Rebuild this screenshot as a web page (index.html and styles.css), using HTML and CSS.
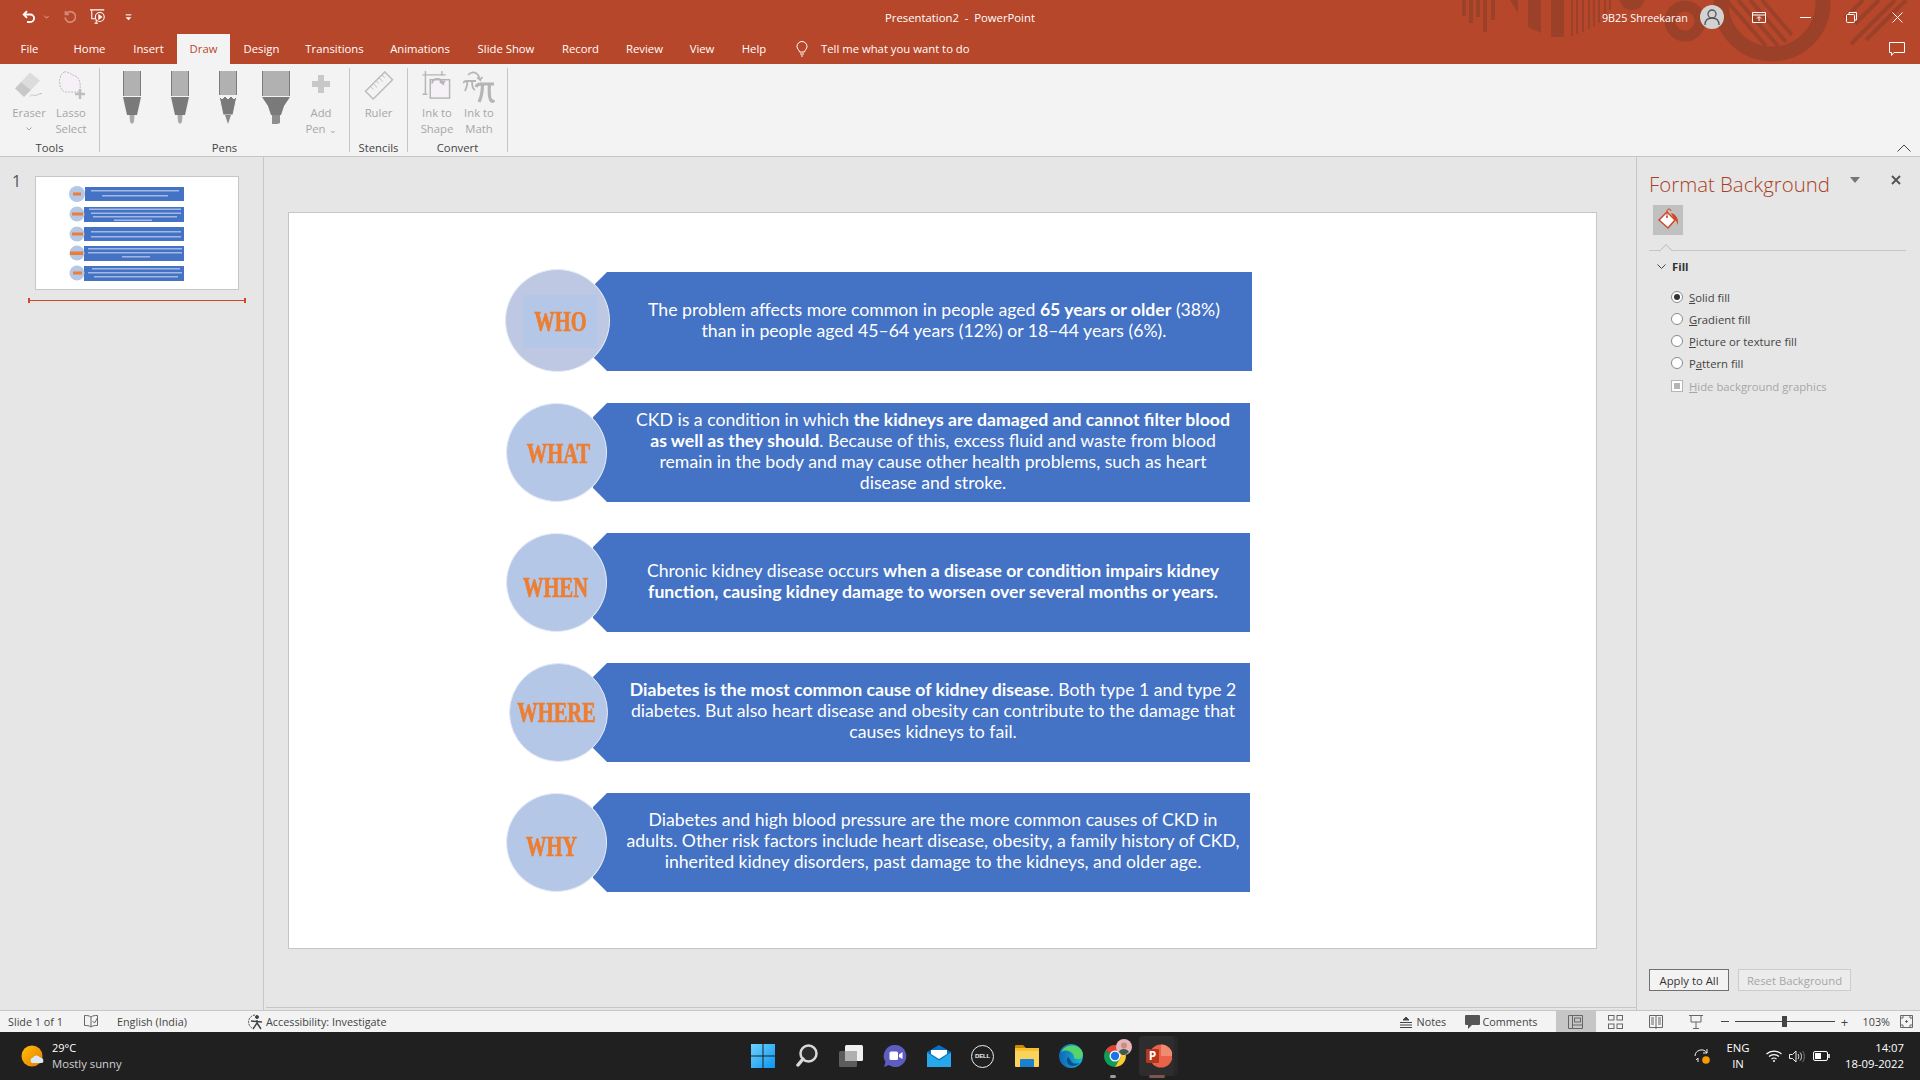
FILE: index.html
```html
<!DOCTYPE html>
<html lang="en">
<head>
<meta charset="utf-8">
<title>Presentation2 - PowerPoint</title>
<link rel="stylesheet" href="styles.css">
</head>
<body>
<header class="chrome">
  <svg class="decor" width="500" height="64" viewBox="1420 0 500 64" fill="#9b412a">
    <rect x="1462" y="0" width="4" height="16"/><rect x="1469" y="0" width="4" height="23"/><rect x="1476" y="0" width="4" height="17"/><rect x="1483" y="0" width="4" height="32"/><rect x="1491" y="0" width="4" height="20"/>
    <path d="M1510 0h8v13z"/><path d="M1528 0h13v33l-13-6z"/><rect x="1551" y="0" width="13" height="37"/>
    <rect x="1571" y="0" width="2" height="36"/><rect x="1576" y="0" width="2" height="34"/><rect x="1582" y="0" width="2" height="32"/><rect x="1588" y="0" width="2" height="29"/><rect x="1593" y="0" width="2" height="26"/><rect x="1598" y="0" width="2" height="23"/><rect x="1604" y="0" width="2" height="18"/><rect x="1609" y="0" width="2" height="10"/>
    <circle cx="1632" cy="-3" r="13"/>
    <circle cx="1685" cy="21" r="15" fill="none" stroke="#9b412a" stroke-width="11"/>
    <circle cx="1772" cy="3" r="51" fill="none" stroke="#9b412a" stroke-width="15"/>
    <g fill="none" stroke="#9b412a" stroke-width="4">
      <path d="M1726 0l40 46M1738 0l40 46M1750 0l36 42M1762 0l30 35"/>
      <path d="M1851 44l44-44M1866 40l40-40M1845 18l18-18M1855 24l24-24"/>
    </g>
  </svg>
  <div class="title-row">
    <div class="qat">
      <svg class="q-undo" width="15" height="14" viewBox="0 0 18 16" fill="none" stroke="#fff" stroke-width="2.200"><path d="M6 1L2 5l4 4M2 5h8a4.500 4.500 0 0 1 0 9H6"/></svg>
      <svg class="q-caret" width="5" height="4" viewBox="0 0 7 4" fill="none" stroke="#f3d9d2"><path d="M.5.500l3 3 3-3"/></svg>
      <svg class="q-redo" width="14" height="14" viewBox="0 0 16 16" fill="none" stroke="#d38a76" stroke-width="2"><path d="M4 1v4h4M4.500 4.500a6 6 0 1 1-1 4"/></svg>
      <svg class="q-show" width="16" height="16" viewBox="0 0 18 18" fill="none" stroke="#fff" stroke-width="1.200"><path d="M0 1h16M2 1v10h4M5 16h4M7 12v4"/><circle cx="11" cy="9" r="5"/><path d="M10 6.500v5l3-2.500z" fill="#fff"/></svg>
      <svg class="q-more" width="7" height="7" viewBox="0 0 10 9" fill="#fff"><rect x="1" y="0" width="8" height="1.500"/><path d="M1 4h8L5 8.500z"/></svg>
    </div>
    <div class="doc-title">Presentation2 &nbsp;-&nbsp; PowerPoint</div>
    <div class="win">
      <span class="user">9B25 Shreekaran</span>
      <span class="avatar"><svg width="16" height="16" viewBox="0 0 16 16" fill="none" stroke="#555" stroke-width="1.300"><circle cx="8" cy="5" r="4"/><path d="M1 16c0-5 3-7 7-7s7 2 7 7"/></svg></span>
      <span class="ctl"><svg width="14" height="11" viewBox="0 0 14 11" fill="none" stroke="#fff"><path d="M.5.500h13v10H.5zM.5 3h13M7 9V5M5 6.500l2-2 2 2"/></svg></span>
      <span class="ctl"><svg width="11" height="1" viewBox="0 0 11 1"><rect width="11" height="1" fill="#fff"/></svg></span>
      <span class="ctl"><svg width="11" height="11" viewBox="0 0 11 11" fill="none" stroke="#fff"><rect x=".5" y="2.500" width="8" height="8" rx="1"/><path d="M3 2V.5h7.500V8H9"/></svg></span>
      <span class="ctl"><svg width="11" height="11" viewBox="0 0 11 11" fill="none" stroke="#fff"><path d="M.5.500l10 10M10.500.500l-10 10"/></svg></span>
    </div>
  </div>
  <nav class="tab-row">
    <div class="tabs">
      <span class="tab">File</span><span class="tab">Home</span><span class="tab">Insert</span><span class="tab tab-on">Draw</span><span class="tab">Design</span><span class="tab">Transitions</span><span class="tab">Animations</span><span class="tab">Slide Show</span><span class="tab">Record</span><span class="tab">Review</span><span class="tab">View</span><span class="tab">Help</span>
    </div>
    <svg class="bulb" width="12" height="16" viewBox="0 0 12 16" fill="none" stroke="#fff"><path d="M3.500 11C3 8.500 1 8 1 5.500a5 5 0 0 1 10 0C11 8 9 8.500 8.500 11zM4 13h4M5 15h2"/></svg>
    <span class="tell">Tell me what you want to do</span>
    <svg class="comment" width="16" height="15" viewBox="0 0 16 15" fill="none" stroke="#fff"><path d="M.5.500h15v10H5l-2.500 3v-3h-2z"/></svg>
  </nav>
</header>

<section class="ribbon">
  <div class="group g-tools">
    <div class="g-body">
      <div class="btn"><svg class="ico" width="28" height="26" viewBox="0 0 28 26"><path d="M15 0l10 8-9 9.500-10-8z" fill="#dcdcdc"/><path d="M6 9.500l10 8-7 7L0 16z" fill="#c8c8c8"/><path d="M15 24c2-3 3-1 5-1s3-2 7-2" fill="none" stroke="#c4c4c4"/></svg><span class="lbl">Eraser</span><svg class="cv" width="6" height="4" viewBox="0 0 6 4" fill="none" stroke="#a6a6a6"><path d="M.5.500L3 3 5.500.500"/></svg></div>
      <div class="btn"><svg class="ico" width="28" height="29" viewBox="0 0 28 29"><path d="M7 1c4-1 8 3 11 4 4 1 6 6 5 14-1 2-1 2-3 2H8C2 19 0 6 7 1z" fill="#f6f1f6" stroke="#bdbdbd" stroke-dasharray="2 1"/><path d="M23 18v10M18 23h10" stroke="#bdbdbd" stroke-width="2.500"/></svg><span class="lbl">Lasso<br>Select</span></div>
    </div>
    <div class="g-label">Tools</div>
  </div>
  <div class="group g-pens">
    <div class="g-body">
      <div class="btn btn-pen"><svg width="18" height="53" viewBox="0 0 18 53"><rect x="0" width="18" height="25" fill="#b1b1b1"/><path d="M.5 0v25M17.500 0v25" stroke="#7c7c7c"/><path d="M0 26h18l-4 18H4z" fill="#7a7a7a"/><path d="M6.500 44h5l-.5 7-2 2-2-2z" fill="#a9a9a9"/></svg></div>
      <div class="btn btn-pen"><svg width="18" height="53" viewBox="0 0 18 53"><rect x="0" width="18" height="25" fill="#b1b1b1"/><path d="M.5 0v25M17.500 0v25" stroke="#7c7c7c"/><path d="M0 26h18l-4 18H4z" fill="#7a7a7a"/><path d="M6.500 44h5l-.5 7-2 2-2-2z" fill="#a9a9a9"/></svg></div>
      <div class="btn btn-pen"><svg width="18" height="53" viewBox="0 0 18 53"><rect x="0" width="18" height="24" fill="#b1b1b1"/><path d="M.5 0v24M17.500 0v24" stroke="#7c7c7c"/><path d="M0 25l3 3 3-3 3 3 3-3 3 3 3-3-4 19H4z" fill="#7a7a7a" stroke="#f3f3f3"/><path d="M6 44h6l-3 9z" fill="#8a8a8a"/></svg></div>
      <div class="btn btn-pen"><svg width="28" height="53" viewBox="0 0 28 53"><rect x="0" width="28" height="25" fill="#b1b1b1"/><path d="M.5 0v25M27.500 0v25" stroke="#7c7c7c"/><path d="M0 26h28l-6 9-3 9H9l-3-9z" fill="#7a7a7a"/><path d="M10 44h8v8l-8 3z" fill="#8d8d8d"/></svg></div>
      <div class="btn btn-add"><svg class="ico" width="18" height="18" viewBox="0 0 18 18" fill="#c8c8c8"><path d="M6 0h6v6h6v6h-6v6H6v-6H0V6h6z"/></svg><span class="lbl">Add<br>Pen <i class="mini">&#8964;</i></span></div>
    </div>
    <div class="g-label">Pens</div>
  </div>
  <div class="group g-sten">
    <div class="g-body">
      <div class="btn btn-wide"><svg class="ico" width="30" height="30" viewBox="0 0 30 30" fill="none" stroke="#bcbcbc" stroke-width="1.500"><path d="M1 21L21 1l8 8L9 29z"/><path d="M6 16l3 3M9 13l4 4M12 10l3 3M15 7l4 4M18 4l3 3" stroke-width="1"/></svg><span class="lbl">Ruler</span></div>
    </div>
    <div class="g-label">Stencils</div>
  </div>
  <div class="group g-conv">
    <div class="g-body">
      <div class="btn"><svg class="ico" width="30" height="30" viewBox="0 0 30 30" fill="none" stroke="#b5b5b5" stroke-width="1.500"><path d="M3 0v24M0 4h24M0 24h5M20 0v5"/><rect x="8" y="9" width="20" height="19" fill="#f6f1f6"/><path d="M10 13c0-6 9-7 11 0l-3-2M21 13l2-3" stroke-width="2"/></svg><span class="lbl">Ink to<br>Shape</span></div>
      <div class="btn"><svg class="ico ico-math" width="32" height="32" viewBox="0 0 32 32" fill="none" stroke="#b5b5b5"><path d="M0 12c1-2 2-2 4-2h9M4.500 10c0 4-1 7-2.500 10M9 10c0 4 0 8 3 9" stroke-width="1.800"/><path d="M13 16c1-3 3-3 5-3h13M19.500 13c0 7-1 13-3.500 18M26.500 13c-.5 7-.5 15 2 17 1 .5 2 0 2.500-1" stroke-width="3.200"/><path d="M5 4c4-4 10-4 12 5l-3-2.500M17 9l2.500-3" stroke-width="1.600"/></svg><span class="lbl">Ink to<br>Math</span></div>
    </div>
    <div class="g-label">Convert</div>
  </div>
  <svg class="collapse" width="14" height="8" viewBox="0 0 14 8" fill="none" stroke="#444"><path d="M.5 7.500L7 1l6.500 6.500"/></svg>
</section>

<main class="main">
  <aside class="thumbs">
    <span class="num">1</span>
    <div class="thumb-col">
      <div class="thumb">
        <svg width="200" height="112" viewBox="0 0 200 112">
          <g fill="#4472c4"><rect x="49" y="10" width="99" height="14"/><rect x="48" y="30" width="100" height="15"/><rect x="48" y="50" width="100" height="14"/><rect x="48" y="69" width="100" height="15"/><rect x="48" y="89" width="100" height="15"/></g>
          <g fill="#b4c7e7"><circle cx="41" cy="17" r="8"/><circle cx="41" cy="37" r="7.500"/><circle cx="41" cy="57" r="7.500"/><circle cx="41" cy="76" r="7.500"/><circle cx="41" cy="96" r="7.500"/></g>
          <g fill="#ed7d31"><rect x="37" y="15.500" width="8" height="3"/><rect x="36" y="35.500" width="11" height="3"/><rect x="36" y="55.500" width="11" height="3"/><rect x="34" y="74.500" width="13" height="3.500"/><rect x="37" y="94.500" width="9" height="3"/></g>
          <g class="mini-lines" fill="#c9d6ef"><rect x="55" y="13" width="88" height="1.500"/><rect x="66" y="18" width="66" height="1.500"/><rect x="53" y="31.500" width="92" height="1.500"/><rect x="55" y="35.500" width="90" height="1.500"/><rect x="57" y="39" width="84" height="1.500"/><rect x="78" y="42.500" width="38" height="1.500"/><rect x="55" y="54" width="90" height="1.500"/><rect x="55" y="59" width="90" height="1.500"/><rect x="52" y="71" width="94" height="1.500"/><rect x="52" y="75" width="94" height="1.500"/><rect x="86" y="79" width="28" height="1.500"/><rect x="56" y="91" width="88" height="1.500"/><rect x="52" y="95" width="94" height="1.500"/><rect x="58" y="99" width="84" height="1.500"/></g>
        </svg>
      </div>
      <div class="rule"></div>
    </div>
  </aside>

  <div class="work">
    <div class="stage">
      <div class="slide">
        <article class="row row-who">
          <div class="band"><p>The problem affects more common in people aged <b>65 years or older</b> (38%)<br>than in people aged 45–64 years (12%) or 18–44 years (6%).</p></div>
          <div class="circle c-who"><span class="box"></span><span class="tag">WHO</span></div>
        </article>
        <article class="row row-what">
          <div class="band"><p>CKD is a condition in which <b>the kidneys are damaged and cannot filter blood<br>as well as they should</b>. Because of this, excess fluid and waste from blood<br>remain in the body and may cause other health problems, such as heart<br>disease and stroke.</p></div>
          <div class="circle c-what"><span class="tag">WHAT</span></div>
        </article>
        <article class="row row-when">
          <div class="band"><p>Chronic kidney disease occurs <b>when a disease or condition impairs kidney<br>function, causing kidney damage to worsen over several months or years.</b></p></div>
          <div class="circle c-when"><span class="tag">WHEN</span></div>
        </article>
        <article class="row row-where">
          <div class="band"><p><b>Diabetes is the most common cause of kidney disease</b>. Both type 1 and type 2<br>diabetes. But also heart disease and obesity can contribute to the damage that<br>causes kidneys to fail.</p></div>
          <div class="circle c-where"><span class="tag">WHERE</span></div>
        </article>
        <article class="row row-why">
          <div class="band"><p>Diabetes and high blood pressure are the more common causes of CKD in<br>adults. Other risk factors include heart disease, obesity, a family history of CKD,<br>inherited kidney disorders, past damage to the kidneys, and older age.</p></div>
          <div class="circle c-why"><span class="tag">WHY</span></div>
        </article>
      </div>
    </div>
  </div>

  <aside class="pane">
    <div class="pane-head">
      <h2>Format Background</h2>
      <svg class="p-tri" width="10" height="6" viewBox="0 0 10 6" fill="#767676"><path d="M0 0h10L5 6z"/></svg>
      <svg class="p-x" width="10" height="10" viewBox="0 0 10 10" stroke="#555" stroke-width="2"><path d="M1 1l8 8M9 1l-8 8"/></svg>
    </div>
    <div class="p-tool"><svg width="24" height="24" viewBox="0 0 24 24"><path d="M11 4l8 8-7 8-9-8z" fill="#fff" stroke="#d24726" stroke-width="1.500"/><path d="M11 9V3a2 2 0 0 1 4 0" fill="none" stroke="#d24726"/><circle cx="11" cy="9" r="1" fill="#d24726"/><path d="M15 5c5 1 8 6 7 12-1-3-2-5-4-6z" fill="#d24726"/></svg></div>
    <div class="p-sep"></div>
    <div class="p-sec"><svg width="9" height="5" viewBox="0 0 9 5" fill="none" stroke="#444"><path d="M.5.500l4 4 4-4"/></svg><b>Fill</b></div>
    <label class="opt"><span class="radio radio-on"></span><span><u>S</u>olid fill</span></label>
    <label class="opt"><span class="radio"></span><span><u>G</u>radient fill</span></label>
    <label class="opt"><span class="radio"></span><span><u>P</u>icture or texture fill</span></label>
    <label class="opt"><span class="radio"></span><span>P<u>a</u>ttern fill</span></label>
    <label class="opt opt-off"><span class="check"></span><span><u>H</u>ide background graphics</span></label>
    <div class="p-btns"><button class="pbtn pbtn-on">Apply to All</button><button class="pbtn pbtn-off">Reset Background</button></div>
  </aside>
</main>

<footer class="status">
  <span class="s-slide">Slide 1 of 1</span>
  <svg class="s-notes" width="14" height="13" viewBox="0 0 14 13" fill="none" stroke="#666"><path d="M7 2C5 .5 3 .5 .5.500v10c2.500 0 4.500 0 6.500 1.500 2-1.500 4-1.500 6.500-1.500V.5C11 .5 9 .5 7 2zM7 2v10M8.500 6l2 2 3-5"/></svg>
  <span class="s-lang">English (India)</span>
  <svg class="s-acc" width="16" height="16" viewBox="0 0 16 16" fill="none" stroke="#444"><path d="M7 1a7 7 0 0 0-3 13" stroke-dasharray="2 1"/><circle cx="9" cy="3" r="1.500" fill="#444"/><path d="M3 7l11 1M9 6v3l-4 6M9 9l4 6" stroke-width="1.500"/></svg>
  <span class="s-acc-t">Accessibility: Investigate</span>
  <div class="s-right">
    <svg width="12" height="12" viewBox="0 0 12 12" fill="none" stroke="#444"><path d="M0 6.500h12M0 9h12M0 11.500h12"/><path d="M3 4l3-3 3 3z" fill="#444"/></svg>
    <span class="s-n">Notes</span>
    <svg class="s-cico" width="15" height="14" viewBox="0 0 15 14" fill="#555"><path d="M1 0h13a1 1 0 0 1 1 1v8a1 1 0 0 1-1 1H7l-4 4v-4H1a1 1 0 0 1-1-1V1a1 1 0 0 1 1-1z"/></svg>
    <span class="s-c">Comments</span>
    <span class="vw vw-on"><svg width="15" height="14" viewBox="0 0 15 14" fill="none" stroke="#666"><path d="M.5.500h14v13H.5zM4.500.500v13M6.500 3h6v4h-6zM4.500 10h10"/></svg></span>
    <span class="vw"><svg width="15" height="14" viewBox="0 0 15 14" fill="none" stroke="#666"><rect x=".5" y=".5" width="5.500" height="4.500"/><rect x="9" y=".5" width="5.500" height="4.500"/><rect x=".5" y="9" width="5.500" height="4.500"/><rect x="9" y="9" width="5.500" height="4.500"/></svg></span>
    <span class="vw"><svg width="14" height="14" viewBox="0 0 14 14" fill="none" stroke="#666"><path d="M.5.500h13v12H.5zM7 .5V14M2 3h3M2 5h3M2 7h3M2 9h3M9 3h3M9 5h3M9 7h3M9 9h3"/></svg></span>
    <span class="vw"><svg width="14" height="14" viewBox="0 0 14 14" fill="none" stroke="#666"><path d="M0 .5h14M2 1v6h10V1M7 7v6M4 13.500h6"/></svg></span>
    <span class="z-m"></span>
    <span class="z-track"><span class="z-thumb"></span></span>
    <span class="z-p">+</span>
    <span class="z-v">103%</span>
    <svg class="z-fit" width="13" height="13" viewBox="0 0 13 13" fill="none" stroke="#666"><path d="M.5.500h12v12H.5zM2 4V2h2M9 2h2v2M2 9v2h2M9 11h2V9M5 6.500h3M6.500 5v3"/></svg>
  </div>
</footer>

<div class="taskbar">
  <div class="weather">
    <svg width="24" height="24" viewBox="0 0 24 24"><defs><linearGradient id="sun" x1="0" y1="0" x2="1" y2="1"><stop offset="0" stop-color="#ffc107"/><stop offset="1" stop-color="#e67a00"/></linearGradient></defs><circle cx="11" cy="12" r="10.500" fill="url(#sun)"/><path d="M11 19a3 3 0 0 1 1-5.500 4 4 0 0 1 7 0 3 3 0 0 1 2 5.500z" fill="#dce8f5"/></svg>
    <div class="w-text"><span class="w-temp">29°C</span><span class="w-sub">Mostly sunny</span></div>
  </div>
  <div class="apps">
    <span class="app"><svg width="24" height="24" viewBox="0 0 24 24"><defs><linearGradient id="wn" x1="0" y1="0" x2="1" y2="1"><stop offset="0" stop-color="#6fd3ff"/><stop offset="1" stop-color="#0a95f0"/></linearGradient></defs><path d="M0 0h11.500v11.500H0zM12.500 0H24v11.500H12.500zM0 12.500h11.500V24H0zM12.500 12.500H24V24H12.500z" fill="url(#wn)"/></svg></span>
    <span class="app"><svg width="22" height="24" viewBox="0 0 22 24" fill="none" stroke="#d9d9d9"><circle cx="12.500" cy="9.500" r="8" stroke-width="2.500" fill="#2b2b2b"/><path d="M7 15l-5 6" stroke-width="3.500" stroke-linecap="round"/></svg></span>
    <span class="app"><svg width="24" height="22" viewBox="0 0 24 22"><rect x="0" y="6" width="18" height="16" rx="1.500" fill="#5c5c5c"/><rect x="6" y="0" width="18" height="16" rx="1.500" fill="#f0f0f0"/><rect x="6" y="6" width="12" height="10" fill="#b0b0b0"/></svg></span>
    <span class="app"><svg width="24" height="24" viewBox="0 0 24 24"><path d="M12 1a11 11 0 1 1-6 20l-5 2 1.500-5A11 11 0 0 1 12 1z" fill="#5e5cc0"/><rect x="6.500" y="7.500" width="8.500" height="8.500" rx="1.500" fill="#fff"/><path d="M16 10.500l3.500-2.500v7L16 13z" fill="#fff"/></svg></span>
    <span class="app"><svg width="24" height="22" viewBox="0 0 24 22"><path d="M12 0l12 7v15H0V7z" fill="#0a6fc2"/><path d="M0 7.500l12 8 12-8V22H0z" fill="#27a8ea"/><path d="M4 5h16v4l-8 5-8-5z" fill="#fff"/></svg></span>
    <span class="app"><span class="dell">DELL</span></span>
    <span class="app"><svg width="24" height="22" viewBox="0 0 24 22"><path d="M0 1a1 1 0 0 1 1-1h7l3 3h-11z" fill="#c98a00"/><rect x="0" y="3" width="24" height="19" rx="1" fill="#fbd25c"/><path d="M0 3h24v3H0z" fill="#f6c02f"/><path d="M6 14h12a1 1 0 0 1 1 1v7H5v-7a1 1 0 0 1 1-1z" fill="#1a80d0"/></svg></span>
    <span class="app"><svg width="24" height="24" viewBox="0 0 24 24"><defs><linearGradient id="eg" x1="0" y1="0" x2="1" y2="0"><stop offset="0" stop-color="#0d66b5"/><stop offset="1" stop-color="#1eb8d8"/></linearGradient></defs><circle cx="12" cy="12" r="12" fill="url(#eg)"/><path d="M2 9C4 1 17 -2 23 7c2 4 0 8-3 8-3 0-5 0-5-2 0-6-11-9-13-4z" fill="#57d36b"/><path d="M9 13c-3 4 0 9 5 9 2 0 5-1 7-3-3 1-8 1-9-2-1-2-2-3-3-4z" fill="#0b4f93"/></svg></span>
    <span class="app app-chrome"><svg width="28" height="28" viewBox="0 0 28 28"><path d="M11 17L1.500 11.500A11 11 0 0 1 20.500 11.500H11z" fill="#db4437"/><path d="M11 17L1.500 11.500A11 11 0 0 0 11 28l5.500-9.500z" fill="#0f9d58"/><path d="M11 28a11 11 0 0 0 9.500-16.500H11l5.500 7z" fill="#fcc934"/><circle cx="11" cy="17" r="5.500" fill="#fff"/><circle cx="11" cy="17" r="4.200" fill="#1a73e8"/><circle cx="20" cy="8" r="8" fill="#e6b4bc"/><path d="M15 13c1-4 8-4 10 0l-4 3h-3z" fill="#3b5c52"/><circle cx="20" cy="6.500" r="3" fill="#c89078"/></svg><i class="pip"></i></span>
    <span class="app app-ppt"><svg width="26" height="24" viewBox="0 0 26 24"><circle cx="15" cy="12" r="11.500" fill="#e8634a"/><path d="M15 .5A11.500 11.500 0 0 1 26.500 12H15z" fill="#f08a70"/><rect x="0" y="5" width="13" height="14" rx="1" fill="#b7361c"/><text x="6.500" y="16" class="ppt-p">P</text></svg><i class="pip pip-ppt"></i></span>
  </div>
  <div class="tray">
    <svg width="16" height="16" viewBox="0 0 16 16" fill="none" stroke="#eee"><path d="M1 8a6.500 6.500 0 0 1 12-3M13 1v4H9M2 12l2-2v4"/><circle cx="12" cy="12" r="3.800" fill="#f59c00" stroke="none"/></svg>
    <div class="lang"><span>ENG</span><span>IN</span></div>
    <svg class="t-wifi" width="16" height="12" viewBox="0 0 16 12" fill="none" stroke="#fff" stroke-width="1.200"><path d="M.5 4a11 11 0 0 1 15 0M3 6.500a7.500 7.500 0 0 1 10 0M5.500 9a4 4 0 0 1 5 0"/><circle cx="8" cy="11" r="1" fill="#fff" stroke="none"/></svg>
    <svg class="t-vol" width="16" height="13" viewBox="0 0 16 13" fill="none" stroke="#eee"><path d="M.5 4.500h3L7 1v11L3.500 8.500h-3zM9 4c1 1.500 1 3.500 0 5M11 2.500c2 2 2 6 0 8" /><path d="M13.500 1c2.500 3 2.500 8 0 11" stroke="#777"/></svg>
    <svg class="t-bat" width="17" height="10" viewBox="0 0 17 10" fill="none" stroke="#fff"><rect x=".5" y=".5" width="14" height="9" rx="1.500"/><rect x="2" y="2" width="6" height="6" fill="#fff" stroke="none"/><path d="M16 3v4" stroke-width="1.500"/></svg>
    <div class="clock"><span>14:07</span><span>18-09-2022</span></div>
  </div>
</div>
</body>
</html>
```
FILE: styles.css
```css
* { box-sizing: border-box; }
html, body { margin: 0; padding: 0; }
body { width: 1920px; height: 1080px; overflow: hidden; display: flex; flex-direction: column; font-family: "Open Sans", "Liberation Sans", sans-serif; font-size: 11.3px; color: #444; background: #e6e6e6; }
svg { display: block; flex: none; }
p, h2 { margin: 0; }

.chrome { position: relative; height: 64px; flex: none; background: #b7472a; color: #fff; }
.decor { position: absolute; right: 0; top: 0; }
.title-row { position: relative; height: 34px; display: grid; grid-template-columns: 1fr auto 1fr; align-items: center; }
.qat { display: flex; align-items: center; }
.q-undo { margin-left: 22px; }
.q-caret { margin-left: 7px; }
.q-redo { margin-left: 13px; }
.q-show { margin-left: 14px; }
.q-more { margin-left: 19px; }
.doc-title { font-size: 11.3px; }
.win { display: flex; justify-content: flex-end; align-items: center; }
.user { margin-right: 12px; font-size: 10.8px; }
.avatar { width: 24px; height: 24px; border-radius: 50%; background: #d2d2d2; margin-right: 12px; display: flex; align-items: center; justify-content: center; }
.ctl { width: 46px; height: 30px; display: flex; align-items: center; justify-content: center; }
.tab-row { position: relative; height: 30px; display: flex; align-items: center; }
.tabs { display: grid; grid-template-columns: 59px 61px 57px 53px 63px 83px 88px 84px 65px 63px 52px 52px; height: 100%; }
.tab { display: flex; align-items: center; justify-content: center; padding-bottom: 2px; }
.tab-on { background: #f3f3f3; color: #b7472a; }
.bulb { margin-left: 16px; margin-bottom: 1px; }
.tell { margin-left: 13px; padding-bottom: 2px; }
.comment { margin-left: auto; margin-right: 15px; }

.ribbon { position: relative; height: 93px; flex: none; padding-top: 4px; background: #f3f3f3; border-bottom: 1px solid #c6c6c6; display: flex; align-items: flex-start; font-size: 11.3px; }
.group { height: 84px; display: flex; flex-direction: column; border-right: 1px solid #c6c6c6; }
.g-tools { width: 100px; }
.g-pens { width: 250px; }
.g-sten { width: 58px; }
.g-conv { width: 100px; }
.g-body { flex: 1; display: flex; }
.g-tools .g-body, .g-pens .g-body, .g-conv .g-body { padding-left: 8px; }
.g-label { height: 8px; line-height: 8px; text-align: center; color: #444; }
.btn { width: 42px; display: flex; flex-direction: column; align-items: center; padding-top: 3px; color: #a6a6a6; line-height: 16px; text-align: center; position: relative; }
.btn-pen { width: 48px; }
.btn-wide { width: 100%; }
.ico { margin-bottom: 5px; height: 29px; }
.ico-math { height: 32px; margin-bottom: 2px; }
.lbl { display: block; }
.btn-add .ico { height: 18px; margin: 4px 0 12px; }
.mini { font-style: normal; font-size: 9px; }
.cv { margin-top: 6px; }
.collapse { position: absolute; right: 9px; bottom: 4px; }

.main { flex: 1; min-height: 0; display: flex; }
.thumbs { width: 264px; flex: none; border-right: 1px solid #c6c6c6; display: flex; align-items: flex-start; padding-top: 16px; }
.num { width: 35px; padding-left: 12px; font-size: 16px; line-height: 16px; color: #555; }
.thumb-col { width: 204px; position: relative; padding-top: 3px; }
.thumb { width: 204px; height: 114px; background: #fff; border: 1px solid #c6c6c6; }
.mini-lines { filter: blur(.5px); opacity: .7; }
.rule { margin: 8px 0 0 -7px; width: 218px; height: 5px; border-left: 2px solid #d24726; border-right: 2px solid #d24726; background: linear-gradient(#d24726, #d24726) center / 100% 1px no-repeat; }

.work { flex: 1; min-width: 0; display: flex; flex-direction: column; padding: 0 0 2px 2px; }
.stage { flex: 1; border-bottom: 1px solid #c6c6c6; padding: 55px 0 0 22px; }
.slide { width: 1309px; height: 737px; background: #fff; border: 1px solid #c6c6c6; padding-top: 59px; display: flex; flex-direction: column; gap: 32px; font-family: Lato, "Liberation Sans", sans-serif; font-size: 17.650px; line-height: 21px; color: #fff; }
.row { position: relative; height: 99px; margin-left: 304px; }
.row-who { width: 659px; }
.row-what { width: 657px; margin-bottom: -1px; }
.row-when { width: 657px; margin-bottom: -1px; }
.row-where { width: 657px; margin-bottom: -1px; }
.row-why { width: 657px; }
.band { height: 100%; background: #4472c4; display: flex; align-items: center; justify-content: center; text-align: center; padding: 0 0 4px 23px; clip-path: polygon(14px 0, 100% 0, 100% 100%, 14px 100%, 0 85px, 0 14px); }
.circle { position: absolute; display: flex; align-items: center; justify-content: center; border-radius: 50%; background: #b4c7e7; border: 1px solid #e4eaf6; }
.c-who { left: -88px; top: -3px; width: 105px; height: 103px; background: #bfc8e2; }
.c-what { left: -87px; top: 0; width: 101px; height: 99px; }
.c-when { left: -87px; top: 0; width: 101px; height: 99px; }
.c-where { left: -84px; top: 0; width: 99px; height: 99px; }
.c-why { left: -87px; top: 0; width: 101px; height: 99px; }
.box { position: absolute; left: 17px; top: 25px; width: 75px; height: 53px; background: #b4c7e7; }
.tag { position: relative; font-family: "Liberation Serif", serif; font-weight: 700; font-size: 20.5px; line-height: 22px; color: #ed7d31; -webkit-text-stroke: .5px #ed7d31; transform: scaleY(1.4); }
.c-who .tag { left: 3px; }
.c-what .tag { left: 2px; }
.c-when .tag { left: -1px; top: 4px; }
.c-where .tag { left: -2px; top: -1px; }
.c-why .tag { left: -5px; top: 3px; }

.pane { width: 284px; flex: none; border-left: 1px solid #c6c6c6; padding: 11px 0 19px 12px; display: flex; flex-direction: column; }
.pane-head { height: 32px; display: flex; align-items: center; position: relative; }
.pane-head h2 { font-size: 20.4px; font-weight: 300; color: #a83f24; line-height: 31px; }
.p-tri { position: absolute; left: 201px; top: 9px; }
.p-x { position: absolute; left: 242px; top: 7px; }
.p-tool { margin: 5px 0 0 4px; width: 30px; height: 30px; background: #c0c0c0; display: flex; align-items: center; justify-content: center; }
.p-sep { position: relative; margin-top: 15px; width: 257px; height: 1px; background: #c6c6c6; }
.p-sep::after { content: ""; position: absolute; left: 12px; top: -4px; width: 9px; height: 9px; background: #e6e6e6; border-left: 1px solid #c6c6c6; border-top: 1px solid #c6c6c6; transform: rotate(45deg); }
.p-sec { margin: 7px 0 0 8px; height: 16px; display: flex; align-items: center; gap: 6px; font-size: 11.3px; color: #333; }
.opt { height: 22px; display: flex; align-items: center; gap: 6px; margin-left: 22px; color: #444; }
.p-sec + .opt { margin-top: 12px; }
.opt-off { height: 24px; color: #a6a6a6; }
.radio { width: 12px; height: 12px; border-radius: 50%; border: 1px solid #8a8a8a; background: #fff; flex: none; display: flex; align-items: center; justify-content: center; }
.radio-on::after { content: ""; width: 6px; height: 6px; border-radius: 50%; background: #333; }
.check { width: 12px; height: 12px; border: 1px solid #b5b5b5; background: #fff; flex: none; display: flex; align-items: center; justify-content: center; }
.check::after { content: ""; width: 6px; height: 6px; background: #b5b5b5; }
.p-btns { margin-top: auto; display: flex; gap: 9px; }
.pbtn { height: 22px; padding: 0; font: inherit; background: #f3f3f3; border: 1px solid #adadad; color: #333; }
.pbtn-on { width: 80px; border-color: #707070; }
.pbtn-off { width: 113px; background: #ececec; border-color: #ccc; color: #a6a6a6; }

.status { height: 22px; flex: none; background: #f3f3f3; border-top: 1px solid #c6c6c6; display: flex; align-items: center; padding-left: 8px; font-size: 10.800px; }
.s-slide { width: 76px; }
.s-lang { margin-left: 19px; width: 131px; }
.s-acc-t { margin-left: 2px; }
.s-right { margin-left: auto; display: flex; align-items: center; height: 100%; }
.s-n { margin-left: 5px; width: 48px; }
.s-cico { margin-left: 0; }
.s-c { margin-left: 3px; width: 73px; }
.vw { width: 40px; height: 100%; display: flex; align-items: center; justify-content: center; }
.vw-on { background: #c6c6c6; }
.z-m { margin-left: 5px; width: 8px; height: 1px; background: #444; }
.z-track { position: relative; margin-left: 6px; width: 100px; height: 1px; background: #444; }
.z-thumb { position: absolute; left: 47px; top: -5px; width: 5px; height: 11px; background: #444; }
.z-p { margin-left: 4px; width: 12px; text-align: center; font-size: 13px; }
.z-v { margin-left: 12px; }
.z-fit { margin: 0 7px 0 10px; }

.taskbar { height: 48px; flex: none; background: #202020; color: #fff; display: grid; grid-template-columns: 1fr auto 1fr; align-items: center; }
.weather { display: flex; align-items: center; padding-left: 21px; gap: 7px; }
.w-text { display: flex; flex-direction: column; line-height: 16px; }
.w-temp { font-size: 11px; }
.w-sub { font-size: 11.300px; color: #d0d0d0; }
.apps { display: grid; grid-auto-flow: column; grid-auto-columns: 44px; margin-left: 1px; height: 100%; }
.app { position: relative; display: flex; align-items: center; justify-content: center; }
.app-chrome svg { margin: 0 0 6px 6px; }
.app-ppt::before { content: ""; position: absolute; left: 2px; right: 7px; top: 4px; bottom: 4px; background: #2d2d2d; border-radius: 4px; box-shadow: 4px 0 0 #272727; }
.app-ppt svg { position: relative; }
.ppt-p { font: 700 12px "Open Sans", sans-serif; fill: #fff; text-anchor: middle; }
.pip { position: absolute; bottom: 2px; left: 17px; width: 6px; height: 3px; border-radius: 2px; background: #9d9d9d; }
.pip-ppt { left: 12px; width: 16px; background: #7d5651; }
.dell { width: 23px; height: 23px; border-radius: 50%; border: 1.500px solid #eee; font: 700 6px/20px "Liberation Sans", sans-serif; text-align: center; color: #eee; letter-spacing: -.2px; }
.tray { display: flex; justify-content: flex-end; align-items: center; padding-right: 16px; }
.lang { display: flex; flex-direction: column; align-items: center; margin-left: 16px; line-height: 16px; width: 24px; }
.t-wifi { margin-left: 16px; }
.t-vol { margin-left: 7px; }
.t-bat { margin-left: 8px; }
.clock { display: flex; flex-direction: column; align-items: flex-end; margin-left: 15px; line-height: 16px; }
```
